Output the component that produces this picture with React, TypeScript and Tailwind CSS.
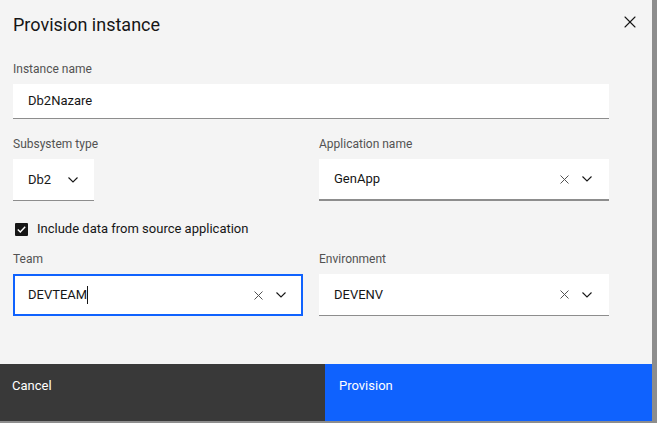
import { X } from "lucide-react";

function Chevron() {
  return (
    <svg width="10" height="6" viewBox="0 0 10 6" fill="none" className="shrink-0">
      <path d="M0.5 0.5L5 5L9.5 0.5" stroke="#161616" strokeWidth="1.1" />
    </svg>
  );
}

function Clear() {
  return (
    <svg width="9" height="9" viewBox="0 0 9 9" fill="none" className="shrink-0">
      <path d="M0.5 0.5L8.5 8.5M8.5 0.5L0.5 8.5" stroke="#525252" strokeWidth="1" />
    </svg>
  );
}

function Label({ children }: { children: React.ReactNode }) {
  return <div className="text-[12px] leading-4 text-[#525252] mb-[7px]">{children}</div>;
}

function Combo({ value, focused }: { value: string; focused?: boolean }) {
  return (
    <div
      className={
        focused
          ? "h-[42px] bg-white border-2 border-[#0f62fe] flex items-center pl-[13px] pr-[15px]"
          : "h-[42px] bg-white border-b border-[#8d8d8d] flex items-center pl-[15px] pr-[17px]"
      }
    >
      <span className="text-[13px] text-[#161616] flex-1 flex items-center">
        {value}
        {focused && <span className="inline-block w-px h-[18px] bg-[#161616]" />}
      </span>
      <Clear />
      <span className="w-[13px]" />
      <Chevron />
    </div>
  );
}

export default function App() {
  return (
    <div className="w-[657px] h-[423px] bg-[#8d8d8d] overflow-hidden" style={{ fontFamily: "Roboto, 'Liberation Sans', sans-serif" }}>
      <div className="w-[652px] h-[421px] bg-[#f4f4f4] flex flex-col">
        <div className="flex justify-between pl-[13px] pr-[12px] pt-[11px]">
          <h1 className="text-[18px] leading-7 text-[#161616]">Provision instance</h1>
          <X size={20} strokeWidth={1.3} className="mt-[1px] text-[#161616]" />
        </div>

        <div className="px-[13px] w-[622px] mt-[22px]">
          <Label>Instance name</Label>
          <div className="h-[35px] bg-white border-b border-[#8d8d8d] flex items-center px-[15px] text-[13px] text-[#161616]">
            Db2Nazare
          </div>

          <div className="grid grid-cols-2 gap-x-4 mt-[17px]">
            <div>
              <Label>Subsystem type</Label>
              <div className="w-[81px] h-[42px] bg-white border-b border-[#8d8d8d] flex items-center pl-[15px] gap-[17px] text-[13px] text-[#161616]">
                Db2
                <Chevron />
              </div>
            </div>
            <div>
              <Label>Application name</Label>
              <div className="h-[42px] bg-white border-b-2 border-[#8d8d8d] flex items-center pl-[15px] pr-[17px]">
                <span className="text-[13px] text-[#161616] flex-1">GenApp</span>
                <Clear />
                <span className="w-[13px]" />
                <Chevron />
              </div>
            </div>
          </div>

          <label className="flex items-center mt-[20px] ml-[2px] gap-[9px]">
            <span className="w-[13px] h-[13px] bg-[#161616] rounded-[1px] flex items-center justify-center">
              <svg width="9" height="7" viewBox="0 0 9 7" fill="none">
                <path d="M0.8 3.5L3.3 6L8.2 0.8" stroke="white" strokeWidth="1.4" />
              </svg>
            </span>
            <span className="text-[13px] leading-4 text-[#161616]">Include data from source application</span>
          </label>

          <div className="grid grid-cols-2 gap-x-4 mt-[14px]">
            <div>
              <Label>Team</Label>
              <Combo value="DEVTEAM" focused />
            </div>
            <div>
              <Label>Environment</Label>
              <Combo value="DEVENV" />
            </div>
          </div>
        </div>

        <div className="flex-1" />
        <div className="h-[57px] flex text-[13px] text-white">
          <button className="w-[325px] bg-[#393939] text-left pl-[12px] pt-[12px] self-stretch flex items-start">Cancel</button>
          <button className="flex-1 bg-[#0f62fe] text-left pl-[14px] pt-[12px] self-stretch flex items-start">Provision</button>
        </div>
      </div>
    </div>
  );
}
